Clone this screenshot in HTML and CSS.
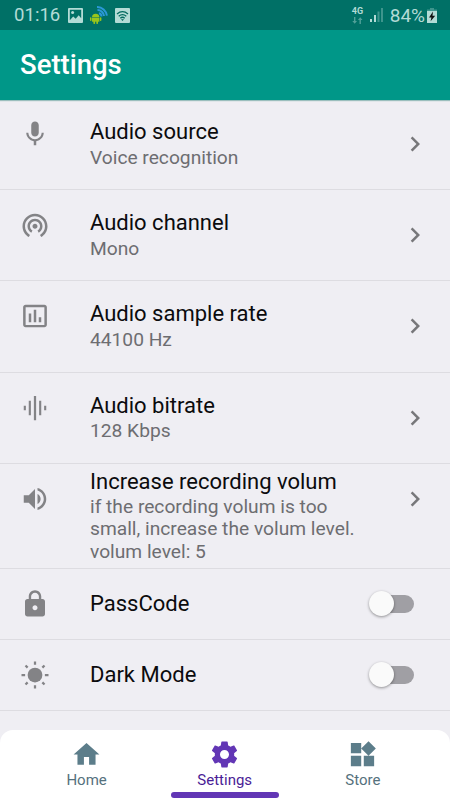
FILE: index.html
```html
<!DOCTYPE html>
<html lang="en">
<head>
<meta charset="utf-8">
<title>Settings</title>
<link rel="stylesheet" href="styles.css">
</head>
<body>
<div class="status">
  <span class="clock">01:16</span>
  <svg class="st-picture" width="15" height="15" viewBox="0 0 15 15"><path fill-rule="evenodd" d="M1 0h13q1 0 1 1v13q0 1-1 1H1q-1 0-1-1V1q0-1 1-1zm.8 1.8v10.4l3.4-3.8 2.5 2.4 3-3.5 2.500 3V1.800z"/><circle cx="4.600" cy="4.600" r="1.500"/></svg>
  <svg class="st-android" width="18" height="18" viewBox="0 0 18 18"><g fill="none" stroke="#2b98d8" stroke-width="2"><path d="M9 7.200a3.500 3.500 0 0 1 2.500 3.300"/><path d="M7.500 4a6.500 6.500 0 0 1 6.500 6"/><path d="M7 1a9.800 9.800 0 0 1 9.900 8.600"/></g><g fill="#99c51b"><path d="M2 11.200a3.700 3.500 0 0 1 7.400 0z"/><path d="M2 11.700h7.400v4H2z"/><rect x="0" y="11.200" width="1.500" height="3.800" rx=".7"/><rect x="9.900" y="11.200" width="1.500" height="3.800" rx=".7"/><rect x="3.400" y="14" width="1.700" height="4" rx=".7"/><rect x="6.300" y="14" width="1.700" height="4" rx=".7"/></g></svg>
  <svg class="st-wifi" width="15" height="15" viewBox="0 0 15 15"><rect width="15" height="15" rx="1"/><g fill="none" stroke="#00695e" stroke-width="1.300"><path d="M2 6q5.500-4.600 11 0M3.700 8.200q3.800-3.200 7.600 0M5.300 10.200q2.200-1.900 4.400 0"/></g><path fill="#00695e" d="M6 11.200h3l-1.500 1.900z"/></svg>
  <span class="net"><span class="net-type">4G</span><svg width="11" height="7" viewBox="0 0 11 7"><path d="M2 0h1.400v4H5L2.700 6.800.3 4H2zM7.500 7h1.400V3h1.600L8.200.2 5.900 3h1.600z"/></svg></span>
  <svg class="st-signal" width="13" height="14" viewBox="0 0 13 14"><path d="M0 11h2v3H0zM4 7h2v7H4z"/><path opacity=".35" d="M7.500 3.500h2V14h-2zM11 0h2v14h-2z"/></svg>
  <span class="percent">84%</span>
  <svg class="st-battery" width="10" height="15" viewBox="0 0 10 15"><path opacity=".35" d="M3 0h4v1.500h3V4H0V1.500h3z"/><path d="M0 3h10v12H0z"/><path fill="#111" d="M6 3.600L2 9.400h2.400l-.8 3.800L8.200 7.700H5.500z"/></svg>
</div>
<header class="bar"><h1>Settings</h1></header>
<main class="list">
  <div class="row">
    <svg class="icon" viewBox="0 0 24 24"><path d="M12 14c1.660 0 2.990-1.340 2.990-3L15 5c0-1.660-1.340-3-3-3S9 3.340 9 5v6c0 1.660 1.340 3 3 3zm5.300-3c0 3-2.540 5.100-5.300 5.100S6.700 14 6.700 11H5c0 3.410 2.720 6.230 6 6.720V21h2v-3.280c3.280-.48 6-3.300 6-6.720h-1.700z"/></svg>
    <div class="text"><div class="title">Audio source</div><div class="sub">Voice recognition</div></div>
    <svg class="chev" viewBox="0 0 24 24"><path d="M10 6L8.590 7.410 13.170 12l-4.580 4.590L10 18l6-6z"/></svg>
  </div>
  <div class="row">
    <svg class="icon" viewBox="0 0 24 24"><path d="M12 11c-1.100 0-2 .9-2 2s.9 2 2 2 2-.9 2-2-.9-2-2-2zm6 2c0-3.310-2.690-6-6-6s-6 2.690-6 6c0 2.220 1.210 4.150 3 5.190l1-1.740c-1.190-.7-2-1.970-2-3.450 0-2.210 1.790-4 4-4s4 1.790 4 4c0 1.480-.81 2.750-2 3.450l1 1.740c1.790-1.040 3-2.970 3-5.190zM12 3C6.480 3 2 7.480 2 13c0 3.700 2.010 6.920 4.990 8.650l1-1.730C5.610 18.530 4 15.960 4 13c0-4.420 3.580-8 8-8s8 3.580 8 8c0 2.960-1.610 5.530-4 6.920l1 1.730c2.990-1.730 5-4.950 5-8.650 0-5.520-4.480-10-10-10z"/></svg>
    <div class="text"><div class="title">Audio channel</div><div class="sub">Mono</div></div>
    <svg class="chev" viewBox="0 0 24 24"><path d="M10 6L8.590 7.410 13.170 12l-4.580 4.590L10 18l6-6z"/></svg>
  </div>
  <div class="row">
    <svg class="icon" viewBox="0 0 24 24"><path d="M9 17H7v-7h2v7zm4 0h-2V7h2v10zm4 0h-2v-4h2v4zm2.500 2.100h-15V5h15v14.100zm0-16.100h-15c-1.100 0-2 .9-2 2v14c0 1.100.9 2 2 2h15c1.100 0 2-.9 2-2V5c0-1.100-.9-2-2-2z"/></svg>
    <div class="text"><div class="title">Audio sample rate</div><div class="sub">44100 Hz</div></div>
    <svg class="chev" viewBox="0 0 24 24"><path d="M10 6L8.590 7.410 13.170 12l-4.580 4.590L10 18l6-6z"/></svg>
  </div>
  <div class="row">
    <svg class="icon" viewBox="0 0 24 24"><path d="M7 6.200h1.700v11.600H7zM11.100 2.300h1.800v19.400h-1.800zM3 10.200h1.700v3.600H3zM15.300 6.200H17v11.600h-1.700zM19.300 10.200H21v3.600h-1.700z"/></svg>
    <div class="text"><div class="title">Audio bitrate</div><div class="sub">128 Kbps</div></div>
    <svg class="chev" viewBox="0 0 24 24"><path d="M10 6L8.590 7.410 13.170 12l-4.580 4.590L10 18l6-6z"/></svg>
  </div>
  <div class="row tall">
    <svg class="icon" viewBox="0 0 24 24"><path d="M3 9v6h4l5 5V4L7 9H3zm13.500 3c0-1.770-1.020-3.290-2.500-4.030v8.050c1.480-.73 2.500-2.250 2.500-4.020zM14 3.230v2.060c2.890.86 5 3.540 5 6.710s-2.110 5.850-5 6.710v2.060c4.010-.91 7-4.490 7-8.770s-2.990-7.860-7-8.770z"/></svg>
    <div class="text"><div class="title">Increase recording volum</div><div class="sub">if the recording volum is too<br>small, increase the volum level.<br>volum level: 5</div></div>
    <svg class="chev" viewBox="0 0 24 24"><path d="M10 6L8.590 7.410 13.170 12l-4.580 4.590L10 18l6-6z"/></svg>
  </div>
  <div class="row short">
    <svg class="icon" viewBox="0 0 24 24"><path d="M18 8h-1V6c0-2.760-2.240-5-5-5S7 3.240 7 6v2H6c-1.100 0-2 .9-2 2v10c0 1.100.9 2 2 2h12c1.100 0 2-.9 2-2V10c0-1.100-.9-2-2-2zm-6 9c-1.100 0-2-.9-2-2s.9-2 2-2 2 .9 2 2-.9 2-2 2zm3.100-9H8.900V6c0-1.710 1.390-3.100 3.100-3.100s3.100 1.390 3.100 3.100v2z"/></svg>
    <div class="text"><div class="title">PassCode</div></div>
    <span class="switch"><span class="thumb"></span></span>
  </div>
  <div class="row short">
    <svg class="icon" viewBox="0 0 24 24"><circle cx="12" cy="12" r="5.900"/><g fill="none" stroke="#838386" stroke-width="1.800"><path d="M12 1.200v2.600M12 20.200v2.600M1.200 12h2.900M19.900 12h2.900M4.400 4.400l1.700 1.700M17.900 17.900l1.700 1.700M4.400 19.600l1.700-1.700M17.900 6.100l1.700-1.700"/></g></svg>
    <div class="text"><div class="title">Dark Mode</div></div>
    <span class="switch"><span class="thumb"></span></span>
  </div>
</main>
<nav class="nav">
  <div class="tab"><svg viewBox="0 0 24 24"><path d="M10 20v-6h4v6h5v-8h3L12 3 2 12h3v8z"/></svg><span>Home</span></div>
  <div class="tab active"><svg viewBox="0 0 24 24"><path d="M19.430 12.980c.04-.32.07-.64.07-.98s-.03-.66-.07-.98l2.110-1.650c.19-.15.24-.42.12-.64l-2-3.460c-.12-.22-.39-.3-.61-.22l-2.490 1c-.52-.4-1.080-.73-1.690-.98l-.38-2.650C14.460 2.180 14.250 2 14 2h-4c-.25 0-.46.18-.49.42l-.38 2.650c-.61.25-1.170.59-1.690.98l-2.490-1c-.23-.09-.49 0-.61.22l-2 3.460c-.13.22-.07.49.12.64l2.110 1.650c-.04.32-.07.65-.07.98s.03.66.07.98l-2.110 1.650c-.19.15-.24.42-.12.64l2 3.460c.12.22.39.3.61.22l2.490-1c.52.4 1.080.73 1.690.98l.38 2.650c.03.24.24.42.49.42h4c.25 0 .46-.18.49-.42l.38-2.650c.61-.25 1.170-.59 1.690-.98l2.490 1c.23.09.49 0 .61-.22l2-3.460c.12-.22.07-.49-.12-.64l-2.110-1.650zM12 15.500c-1.930 0-3.500-1.570-3.500-3.500s1.570-3.500 3.500-3.500 3.500 1.570 3.500 3.500-1.570 3.500-3.500 3.500z"/></svg><span>Settings</span><i class="indicator"></i></div>
  <div class="tab"><svg viewBox="0 0 24 24"><path d="M13 13v8h8v-8h-8zM3 21h8v-8H3v8zM3 3v8h8V3H3zm13.660-1.310L11 7.340 16.660 13l5.660-5.660-5.660-5.650z"/></svg><span>Store</span></div>
</nav>
</body>
</html>
```

FILE: styles.css
```css
* { box-sizing: border-box; }
body {
  margin: 0;
  width: 450px;
  height: 800px;
  overflow: hidden;
  display: flex;
  flex-direction: column;
  background: #efeef3;
  font-family: Roboto, "Liberation Sans", sans-serif;
}
.status {
  flex: none;
  height: 30px;
  padding: 0 13px 0 14px;
  display: flex;
  align-items: center;
  background: #007066;
  color: #b3dbd6;
  fill: #b3dbd6;
}
.status svg { flex: none; }
.clock { width: 54px; font-size: 18.600px; line-height: 30px; }
.st-android { margin-left: 7px; }
.st-wifi { margin-left: 7px; }
.net { margin-left: auto; display: flex; flex-direction: column; width: 18px; }
.net-type { font-size: 9px; line-height: 9px; font-weight: 700; }
.net svg { opacity: .45; margin-top: 1px; }
.percent { font-size: 19px; margin-left: 7px; }
.st-battery { margin-left: 2px; }
.bar {
  flex: none;
  height: 70px;
  padding-left: 20px;
  display: flex;
  align-items: center;
  background: #009788;
  box-shadow: 0 1px 1px rgba(0, 100, 90, .35);
  z-index: 1;
}
h1 { margin: 0; color: #fff; font-size: 27.500px; line-height: 32px; font-weight: 500; }
.list { flex: 1; min-height: 0; }
.row {
  height: 91.300px;
  display: flex;
  padding: 20px 20px 0;
  border-bottom: 1px solid #dddce1;
}
.row:first-child { height: 90px; padding-top: 19px; }
.icon { width: 30px; height: 30px; flex: none; fill: #838386; }
.text { flex: 1; padding-left: 40px; white-space: nowrap; }
.title { font-size: 22px; line-height: 26px; color: #0b0b0d; }
.sub { font-size: 19.200px; line-height: 22.400px; margin-top: 2px; color: #6d6d71; }
.row:not(.tall) .sub { margin-top: 1.500px; }
.chev { width: 30px; height: 30px; flex: none; margin: 10px 0 0; fill: #77777a; }
.row.tall { height: 105px; padding-top: 5px; }
.tall .icon { margin-top: 15px; }
.tall .sub { margin-top: 1px; }
.tall .chev { margin-top: 15px; }
.row.short { height: 71px; padding-top: 0; align-items: center; }
.switch { position: relative; width: 40px; height: 18px; margin-right: 16px; border-radius: 9px; background: #a09fa4; }
.thumb {
  position: absolute;
  left: -5px;
  top: -3.500px;
  width: 25px;
  height: 25px;
  border-radius: 50%;
  background: #fafafa;
  box-shadow: 0 1px 3px rgba(0, 0, 0, .4);
}
.nav {
  flex: none;
  height: 70px;
  padding: 0 18px 0 17.500px;
  display: grid;
  grid-template-columns: repeat(3, 1fr);
  background: #fff;
  border-radius: 13px 13px 0 0;
}
.tab {
  position: relative;
  display: flex;
  flex-direction: column;
  align-items: center;
  padding-top: 9px;
  font-size: 15px;
  line-height: 20px;
  color: #55717d;
  fill: #5c7d8a;
}
.tab svg { width: 31px; height: 31px; }
.active { color: #4a1d96; fill: #6236b5; }
.indicator { position: absolute; left: 50%; bottom: 2px; width: 108px; height: 6px; margin-left: -54px; border-radius: 3px; background: #6236b5; }
```
